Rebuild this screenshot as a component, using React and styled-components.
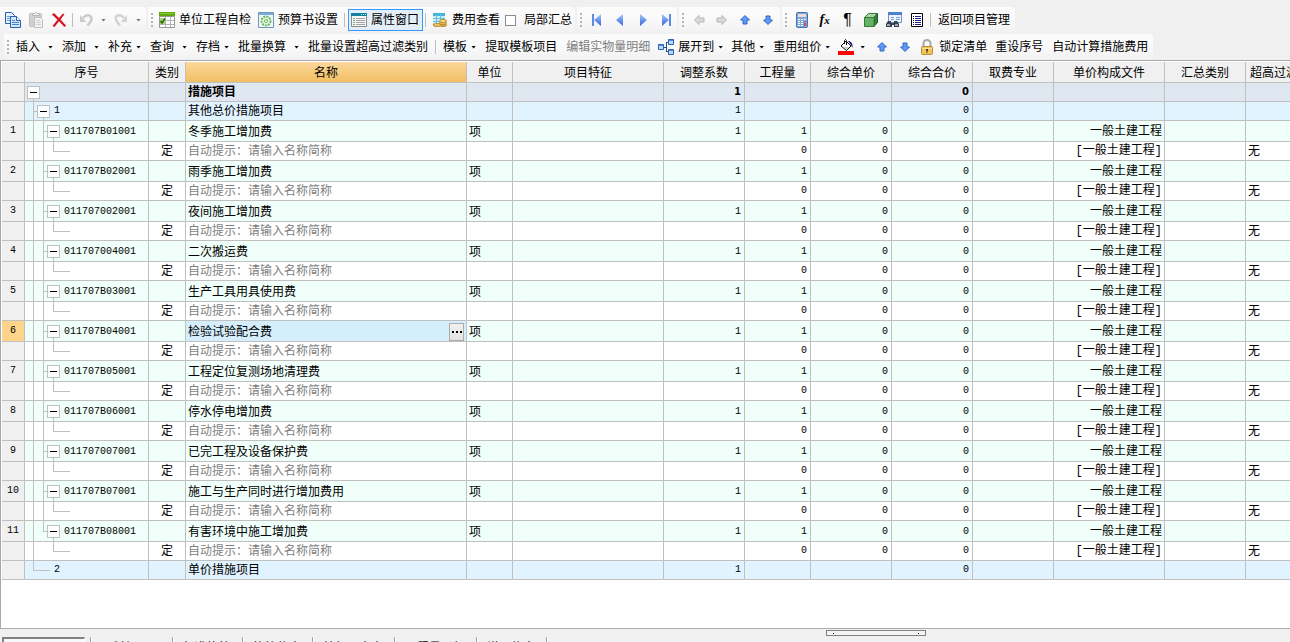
import { Fragment, useState } from "react";
import styled, { createGlobalStyle, css } from "styled-components";

const ITEMS = [
  { code: "011707B01001", name: "冬季施工增加费" },
  { code: "011707B02001", name: "雨季施工增加费" },
  { code: "011707002001", name: "夜间施工增加费" },
  { code: "011707004001", name: "二次搬运费" },
  { code: "011707B03001", name: "生产工具用具使用费" },
  { code: "011707B04001", name: "检验试验配合费" },
  { code: "011707B05001", name: "工程定位复测场地清理费" },
  { code: "011707B06001", name: "停水停电增加费" },
  { code: "011707007001", name: "已完工程及设备保护费" },
  { code: "011707B07001", name: "施工与生产同时进行增加费用" },
  { code: "011707B08001", name: "有害环境中施工增加费" },
];

const COLUMNS = [
  { title: "", width: 23 },
  { title: "序号", width: 124 },
  { title: "类别", width: 37 },
  { title: "名称", width: 281, active: true },
  { title: "单位", width: 46 },
  { title: "项目特征", width: 151 },
  { title: "调整系数", width: 81 },
  { title: "工程量", width: 66 },
  { title: "综合单价", width: 81 },
  { title: "综合合价", width: 81 },
  { title: "取费专业", width: 81 },
  { title: "单价构成文件", width: 111 },
  { title: "汇总类别", width: 81 },
  { title: "超高过滤类别", width: 81 },
];

const TABS = [
  "工料机显示",
  "标准换算",
  "换算信息",
  "特征及内容",
  "工程量明细",
  "说明信息",
];

function App() {
  const [selected, setSelected] = useState(5);

  return (
    <Page>
      <GlobalStyle />
      <Toolbars>
        <MainToolbar />
        <EditToolbar />
      </Toolbars>
      <GridPanel>
        <Grid>
          <colgroup>
            {COLUMNS.map((col, i) => (
              <Col key={i} $width={col.width} />
            ))}
          </colgroup>
          <thead>
            <tr>
              {COLUMNS.map((col, i) => (
                <HeadCell key={i} $active={col.active}>
                  {col.title}
                </HeadCell>
              ))}
            </tr>
          </thead>
          <tbody>
            <Row $kind="root">
              <RowHead />
              <Cell>
                <Tree>
                  <Node>
                    <Toggle aria-label="折叠" />
                  </Node>
                </Tree>
              </Cell>
              <Cell />
              <Cell>措施项目</Cell>
              <Cell />
              <Cell />
              <NumCell>1</NumCell>
              <NumCell />
              <NumCell />
              <NumCell>0</NumCell>
              <EmptyCells count={4} />
            </Row>
            <Row $kind="group">
              <RowHead />
              <Cell>
                <Tree>
                  <Guide $branch />
                  <Node>
                    <Toggle aria-label="折叠" />
                  </Node>
                  <Code>1</Code>
                </Tree>
              </Cell>
              <Cell />
              <Cell>其他总价措施项目</Cell>
              <Cell />
              <Cell />
              <NumCell>1</NumCell>
              <NumCell />
              <NumCell />
              <NumCell>0</NumCell>
              <EmptyCells count={4} />
            </Row>
            {ITEMS.map((item, i) => (
              <ItemRows
                key={item.code}
                item={item}
                index={i}
                last={i === ITEMS.length - 1}
                selected={i === selected}
                onSelect={() => setSelected(i)}
              />
            ))}
            <Row $kind="group">
              <RowHead />
              <Cell>
                <Tree>
                  <Elbow />
                  <Code>2</Code>
                </Tree>
              </Cell>
              <Cell />
              <Cell>单价措施项目</Cell>
              <Cell />
              <Cell />
              <NumCell>1</NumCell>
              <NumCell />
              <NumCell />
              <NumCell>0</NumCell>
              <EmptyCells count={4} />
            </Row>
          </tbody>
        </Grid>
      </GridPanel>
      <Splitter>
        <SplitHandle aria-label="展开面板">
          <i />
          <i />
        </SplitHandle>
      </Splitter>
      <TabStrip>
        <ActiveTab>查看单价构成</ActiveTab>
        {TABS.map((tab) => (
          <Tab key={tab}>{tab}</Tab>
        ))}
        <TabEnd />
      </TabStrip>
    </Page>
  );
}

function EmptyCells({ count }) {
  return Array.from({ length: count }, (_, i) => <Cell key={i} />);
}

function ItemRows({ item, index, last, selected, onSelect }) {
  return (
    <Fragment>
      <Row $kind="item" onClick={onSelect}>
        <RowHead $selected={selected}>{index + 1}</RowHead>
        <Cell>
          <Tree $tall>
            <Guide />
            <Guide $branch $end={last} />
            <Node>
              <Toggle aria-label="折叠" />
            </Node>
            <Code>{item.code}</Code>
          </Tree>
        </Cell>
        <Cell />
        <Cell $selected={selected}>
          {selected ? (
            <Editing>
              {item.name}
              <MoreButton aria-label="更多">
                <i />
                <i />
                <i />
              </MoreButton>
            </Editing>
          ) : (
            item.name
          )}
        </Cell>
        <Cell>项</Cell>
        <Cell />
        <NumCell>1</NumCell>
        <NumCell>1</NumCell>
        <NumCell>0</NumCell>
        <NumCell>0</NumCell>
        <Cell />
        <FileCell>一般土建工程</FileCell>
        <Cell />
        <Cell />
      </Row>
      <Row $kind="sub">
        <RowHead />
        <Cell>
          <Tree>
            <Guide />
            <Guide $blank={last} />
            <Elbow />
          </Tree>
        </Cell>
        <Cell $align="center">定</Cell>
        <Cell $muted>自动提示：请输入名称简称</Cell>
        <Cell />
        <Cell />
        <NumCell />
        <NumCell>0</NumCell>
        <NumCell>0</NumCell>
        <NumCell>0</NumCell>
        <Cell />
        <FileCell>[一般土建工程]</FileCell>
        <Cell />
        <Cell>无</Cell>
      </Row>
    </Fragment>
  );
}

function MainToolbar() {
  return (
    <Toolbar>
      <Segment $first>
        <IconButton aria-label="复制"><CopyIcon /></IconButton>
        <IconButton aria-label="粘贴"><PasteIcon /></IconButton>
        <IconButton aria-label="删除"><DeleteIcon /></IconButton>
        <Divider />
        <SplitIconButton aria-label="撤销"><UndoIcon /><Caret $muted /></SplitIconButton>
        <SplitIconButton aria-label="重做"><RedoIcon /><Caret $muted /></SplitIconButton>
      </Segment>
      <Segment>
        <Grip />
        <LabelButton><CheckTableIcon />单位工程自检</LabelButton>
        <LabelButton><SettingsIcon />预算书设置</LabelButton>
        <Divider />
        <PressedButton><WindowIcon />属性窗口</PressedButton>
        <Divider />
        <LabelButton><CoinsIcon />费用查看</LabelButton>
        <CheckLabel>
          <CheckBox type="checkbox" />
          局部汇总
        </CheckLabel>
      </Segment>
      <Segment>
        <Grip />
        <IconButton aria-label="第一条"><NavIcon bar="left" left /></IconButton>
        <IconButton aria-label="上一条"><NavIcon left /></IconButton>
        <IconButton aria-label="下一条"><NavIcon /></IconButton>
        <IconButton aria-label="最后一条"><NavIcon bar="right" /></IconButton>
      </Segment>
      <Segment $pad>
        <Grip />
        <IconButton aria-label="升级"><GrayArrowIcon left /></IconButton>
        <IconButton aria-label="降级"><GrayArrowIcon /></IconButton>
        <IconButton aria-label="上移"><BlueArrowIcon /></IconButton>
        <IconButton aria-label="下移"><BlueArrowIcon down /></IconButton>
      </Segment>
      <Segment>
        <Grip />
        <IconButton aria-label="计算器"><CalculatorIcon /></IconButton>
        <IconButton aria-label="函数"><FxMark><b>f</b>x</FxMark></IconButton>
        <IconButton aria-label="特殊符号"><Pilcrow>¶</Pilcrow></IconButton>
        <IconButton aria-label="图元"><CubeIcon /></IconButton>
        <IconButton aria-label="查找"><FindIcon /></IconButton>
        <IconButton aria-label="清单"><ListIcon /></IconButton>
        <Divider />
        <TextButton>返回项目管理</TextButton>
      </Segment>
    </Toolbar>
  );
}

function EditToolbar() {
  return (
    <Toolbar $indent>
      <Segment>
        <Grip />
        <TextButton $split>插入<Caret /></TextButton>
        <TextButton $split>添加<Caret /></TextButton>
        <TextButton>补充<Caret /></TextButton>
        <TextButton $split>查询<Caret /></TextButton>
        <TextButton>存档<Caret /></TextButton>
        <TextButton $split>批量换算<Caret /></TextButton>
        <TextButton>批量设置超高过滤类别</TextButton>
        <Divider />
        <TextButton>模板<Caret /></TextButton>
        <TextButton>提取模板项目</TextButton>
        <TextButton disabled>编辑实物量明细</TextButton>
        <LabelButton><ExpandIcon />展开到<Caret /></LabelButton>
        <TextButton>其他<Caret /></TextButton>
        <TextButton>重用组价<Caret /></TextButton>
        <SplitIconButton aria-label="填充颜色"><FillIcon /><Caret /></SplitIconButton>
        <IconButton aria-label="上移"><BlueArrowIcon /></IconButton>
        <IconButton aria-label="下移"><BlueArrowIcon down /></IconButton>
        <LabelButton><LockIcon />锁定清单</LabelButton>
        <TextButton>重设序号</TextButton>
        <TextButton>自动计算措施费用</TextButton>
      </Segment>
    </Toolbar>
  );
}

/* icons */

function CopyIcon() {
  return (
    <Icon viewBox="0 0 16 16">
      <path d="M.5.5h6l3 3v8h-9z" fill="#e8f3fd" stroke="#2460ae" />
      <path d="M2 4.5h4M2 6.5h4M2 8.5h4" stroke="#5c9ad8" />
      <path d="M5.5 4.5h6l4 4v7h-10z" fill="#d3e8fb" stroke="#2460ae" />
      <path d="M11.5 4.5v4h4" fill="#fff" stroke="#2460ae" />
      <path d="M7 8.5h3M7 10.5h7M7 12.5h7" stroke="#3f83cd" />
    </Icon>
  );
}

function PasteIcon() {
  return (
    <Icon viewBox="0 0 16 16">
      <rect x="1.5" y="1.5" width="12" height="13" rx="1" fill="#d0d0d0" stroke="#c0c0c0" />
      <path d="M4.5 3.5v-2h2l1-1h1l1 1h2v2z" fill="#ededed" stroke="#b8b8b8" />
      <path d="M6.5 5.5h6l2 2v8h-8z" fill="#f3f3f3" stroke="#c0c0c0" />
      <path d="M8 8.5h4M8 10.5h5M8 12.5h5" stroke="#d0d0d0" />
    </Icon>
  );
}

function DeleteIcon() {
  return (
    <Icon viewBox="0 0 16 16">
      <path d="M1 2.5 3 1l5 5 4-4.5 1.5.8-4 5.2 5.500 6-1.500 1.500L8 9.300 3.500 15 1.500 14l5-6.300z" fill="#d8101f" />
    </Icon>
  );
}

function UndoIcon() {
  return (
    <Icon viewBox="0 0 16 16">
      <path d="M4 6c4-4.5 9-3 8.500 1.500-.3 2.500-2.500 4-4 6" fill="none" stroke="#cbcbcb" strokeWidth="2.500" />
      <path d="M1 3v7h6z" fill="#cbcbcb" />
    </Icon>
  );
}

function RedoIcon() {
  return (
    <Icon viewBox="0 0 16 16">
      <path d="M10 6C6 1.500 1 3 2 7.500c.5 2.500 2.500 4 4 6" fill="none" stroke="#d2d2d2" strokeWidth="2.500" />
      <path d="M13 3v7H7z" fill="#d2d2d2" />
    </Icon>
  );
}

function CheckTableIcon() {
  return (
    <Icon viewBox="0 0 16 16">
      <path d="M.5 4.500h15v11H.5z" fill="#fff" stroke="#999" />
      <path d="M0 0h16v4H0z" fill="#5fa80c" />
      <path d="M1 1h14v1H1z" fill="#8dcc35" />
      <path d="M6.500 5v10M11.500 5v10M1 8.500h14M1 12.500h14" stroke="#b4b4b4" />
      <path d="M1 6h5v6H1z" fill="#a8d66e" />
      <path d="m1.500 9 1.500 2 3-4.500" fill="none" stroke="#26670b" strokeWidth="1.500" />
    </Icon>
  );
}

function SettingsIcon() {
  return (
    <Icon viewBox="0 0 16 16">
      <path d="M.5.5h15v15H.5z" fill="#eef7fc" stroke="#7198b9" />
      <path d="M1 1h14v2H1z" fill="#76add8" />
      <circle cx="8" cy="9" r="4.500" fill="#e3f5da" stroke="#6db85e" strokeWidth="2" strokeDasharray="2 1" />
      <circle cx="8" cy="9" r="1.500" fill="#fff" stroke="#6db85e" />
    </Icon>
  );
}

function WindowIcon() {
  return (
    <Icon viewBox="0 0 16 16">
      <path d="M.5 1.500h15v13H.5z" fill="#f6f6f6" stroke="#8b8b8b" />
      <path d="M0 1h16v3H0z" fill="#14809f" />
      <path d="M10 2h1v1h-1zM12 2h1v1h-1zM14 2h1v1h-1z" fill="#bcecf8" />
      <path d="M2 6.500h2M2 8.500h2M2 10.500h2M2 12.500h2" stroke="#6fae64" />
      <path d="M5 6.500h9M5 8.500h9M5 10.500h9M5 12.500h9" stroke="#a5a5a5" />
    </Icon>
  );
}

function CoinsIcon() {
  return (
    <Icon viewBox="0 0 16 16">
      <path d="M1 1h12v11H1z" fill="#c9eefa" />
      <path d="M1 1h12v3H1z" fill="#42b4dc" />
      <path d="M1 6.500h12M1 9.500h12M4.500 2v10M8.500 2v10" stroke="#67bfdc" />
      <ellipse cx="11" cy="13" rx="3.500" ry="1.500" fill="#e0a63f" stroke="#b98a3c" />
      <ellipse cx="11" cy="11" rx="3.500" ry="1.500" fill="#f2c356" stroke="#b98a3c" />
      <ellipse cx="11" cy="9" rx="3.500" ry="1.500" fill="#fbdc83" stroke="#b98a3c" />
      <ellipse cx="5" cy="13" rx="4" ry="1.500" fill="#f4c75e" stroke="#b98a3c" />
    </Icon>
  );
}

function NavIcon({ bar, left }) {
  return (
    <Icon viewBox="0 0 16 16">
      <defs>
        <linearGradient id="nav" x1="0" y1="0" x2="0" y2="1">
          <stop offset="0" stopColor="#a9c6fb" />
          <stop offset="1" stopColor="#3468d8" />
        </linearGradient>
      </defs>
      {bar === "left" && <path d="M3 2h2v12H3z" fill="#5b8be6" />}
      {bar === "right" && <path d="M11 2h2v12h-2z" fill="#5b8be6" />}
      {left ? (
        <path d={bar ? "M12 2v12L5 8z" : "M11 2v12L4 8z"} fill="url(#nav)" />
      ) : (
        <path d={bar ? "M4 2v12l7-6z" : "M5 2v12l7-6z"} fill="url(#nav)" />
      )}
    </Icon>
  );
}

function GrayArrowIcon({ left }) {
  return (
    <Icon viewBox="0 0 16 16">
      <path
        d={left ? "M3.500 8 8 3.500V6h5v4H8v2.500z" : "M12.500 8 8 3.500V6H3v4h5v2.500z"}
        fill="#d9d9d9"
        stroke="#b7b7b7"
      />
    </Icon>
  );
}

function BlueArrowIcon({ down }) {
  return (
    <Icon viewBox="0 0 16 16">
      <path
        d={down ? "M8 12.500 3.500 8H6V4h4v4h2.500z" : "M8 3.500 12.500 8H10v4H6V8H3.500z"}
        fill="#5e9bf5"
        stroke="#2f66cf"
      />
    </Icon>
  );
}

function CalculatorIcon() {
  return (
    <Icon viewBox="0 0 16 16">
      <rect x="2.500" y=".5" width="11" height="15" rx="1" fill="#7aa6dd" stroke="#4674b4" />
      <path d="M4 2h8v3H4z" fill="#f3d9cf" />
      <path d="M4 7h2v1H4zM7 7h2v1H7zM10 7h2v1h-2zM4 9h2v1H4zM7 9h2v1H7zM4 11h2v1H4zM7 11h2v1H7zM4 13h2v1H4zM7 13h2v1H7z" fill="#fff" />
      <path d="M10 9h2v1h-2zM10 11h2v3h-2z" fill="#d8475b" />
    </Icon>
  );
}

function CubeIcon() {
  return (
    <Icon viewBox="0 0 16 16">
      <path d="m1.500 5.500 4-4h9l-3.500 4z" fill="#a3d7a1" stroke="#347b38" />
      <path d="M11 5.500 14.500 1.500v9l-3.500 4z" fill="#347f3a" stroke="#245f2b" />
      <path d="M1.500 5.500H11v9H1.500z" fill="#66b268" stroke="#347b38" />
    </Icon>
  );
}

function FindIcon() {
  return (
    <Icon viewBox="0 0 16 16">
      <path d="M2.500.5h13v10h-13z" fill="#eaf3ff" stroke="#6d93cf" />
      <path d="M2 0h14v3H2z" fill="#4d81cf" />
      <path d="M5 5.500h3M10 5.500h4M5 7.500h3M10 7.500h4" stroke="#7d9ed0" />
      <path d="M2 9h3v2h3V9h3l2 3v3H8v-2H6v2H0v-3z" fill="#38404c" />
      <path d="M1 12h3v2H1zM9 12h3v2H9z" fill="#99aabd" />
    </Icon>
  );
}

function ListIcon() {
  return (
    <Icon viewBox="0 0 16 16">
      <path d="M2.500 1.500h11v13h-11z" fill="#fff" stroke="#000" />
      <path d="M4 4.500h1M4 6.500h1M4 8.500h1M4 10.500h1M4 12.500h1" stroke="#000" />
      <path d="M6 4.500h6M6 6.500h6M6 8.500h6M6 10.500h6M6 12.500h6" stroke="#22228c" />
    </Icon>
  );
}

function ExpandIcon() {
  return (
    <Icon viewBox="0 0 16 16">
      <path d="M5 8.500h3.500M8.500 3v10M8.500 3.500h2M8.500 12.500h2" fill="none" stroke="#274e92" />
      <path d="M.5 5.500h5v5h-5zM10.500.5h5v5h-5zM10.500 10.500h5v5h-5z" fill="#b9d5fb" stroke="#2e62b4" />
      <path d="M1 6h4v1H1zM11 1h4v1h-4zM11 11h4v1h-4z" fill="#568ade" />
    </Icon>
  );
}

function FillIcon() {
  return (
    <Icon viewBox="0 0 16 16">
      <path d="m3 7 5-5 5 5-4.500 4.500z" fill="#fff" stroke="#111" />
      <path d="M5 8h6l-2.500 2.500z" fill="#c4c4c4" />
      <path d="M6.500 5V1.500l1-1 1 1V6" fill="none" stroke="#111" />
      <path d="M10 2c3 0 5 2 4.500 7L13 6z" fill="#16167b" />
      <path d="M0 12h16v4H0z" fill="#f00" />
    </Icon>
  );
}

function LockIcon() {
  return (
    <Icon viewBox="0 0 16 16">
      <path d="M4.500 8V4.500a3.500 3.500 0 0 1 7 0V8" fill="none" stroke="#a8a8a8" strokeWidth="2" />
      <rect x="2.500" y="7.500" width="11" height="8" rx="1" fill="#f1c35b" stroke="#b98b38" />
      <path d="M3 9h10v1H3z" fill="#fbe09a" />
      <path d="M7 10h2v1.500l-.5.5v2h-1v-2L7 11.500z" fill="#573c10" />
    </Icon>
  );
}

/* styles */

const GlobalStyle = createGlobalStyle`
  body {
    margin: 0;
    overflow: hidden;
    background: #f0f0f0;
  }

  * {
    box-sizing: border-box;
  }

  button,
  label,
  table {
    font-family: "Liberation Sans", "Noto Sans CJK SC", sans-serif;
    font-size: 12px;
    line-height: 18px;
    color: #000;
  }
`;

const Page = styled.div`
  height: 100vh;
  display: flex;
  flex-direction: column;
`;

const Toolbars = styled.header`
  display: flex;
  flex-direction: column;
  gap: 1px;
  padding-top: 7px;
`;

const Toolbar = styled.div`
  display: flex;
  gap: 2px;
  padding-left: ${({ $indent }) => ($indent ? "4px" : "0")};
`;

const Segment = styled.div`
  display: flex;
  align-items: center;
  height: 26px;
  padding-left: ${({ $first }) => ($first ? "1px" : "0")};
  padding-right: ${({ $pad }) => ($pad ? "1px" : "0")};
  border-radius: 0 3px 3px 0;
  background: linear-gradient(#fcfcfc, #f9f9f9 50%, #f1f1f1);
`;

const Grip = styled.span`
  width: 2px;
  height: 14px;
  margin: 0 3px;
  background: repeating-linear-gradient(#b4b4b4 0 2px, transparent 2px 4px);
`;

const Divider = styled.span`
  width: 1px;
  height: 14px;
  margin: 0 3px 0 2px;
  background: #bdbdbd;
`;

const Icon = styled.svg`
  width: 16px;
  height: 16px;
  flex: none;
`;

const Caret = styled.span`
  width: 5px;
  height: 3px;
  background: ${({ $muted }) => ($muted ? "#777" : "#000")};
  clip-path: polygon(0 0, 100% 0, 50% 100%);
`;

const BaseButton = styled.button`
  display: flex;
  align-items: center;
  flex: none;
  height: 22px;
  border: 0;
  padding: 0;
  background: none;
  white-space: nowrap;
`;

const IconButton = styled(BaseButton)`
  justify-content: center;
  width: 23px;
`;

const SplitIconButton = styled(BaseButton)`
  gap: 6px;
  padding: 0 5px 0 3px;
`;

const TextButton = styled(BaseButton)`
  gap: ${({ $split }) => ($split ? "8px" : "4px")};
  padding: 0 5px 0 4px;

  &:disabled {
    color: #808080;
  }
`;

const LabelButton = styled(BaseButton)`
  gap: 4px;
  padding: 0 4px 0 3px;
`;

const PressedButton = styled(BaseButton)`
  gap: 4px;
  padding: 0 3px 0 2px;
  border: 1px solid #3399ff;
  background: #e3eef9;
`;

const CheckLabel = styled.label`
  display: flex;
  align-items: center;
  gap: 8px;
  padding: 0 3px 0 1px;
  white-space: nowrap;
`;

const CheckBox = styled.input`
  appearance: none;
  width: 11px;
  height: 11px;
  margin: 0;
  border: 1px solid #8c8c8c;
  background: #fff;

  &:checked {
    background: #3399ff;
  }
`;

const FxMark = styled.span`
  font-family: "Liberation Serif", serif;
  font-size: 11px;
  font-style: italic;
  font-weight: bold;

  b {
    font-size: 14px;
  }
`;

const Pilcrow = styled.span`
  font-family: "Liberation Sans", sans-serif;
  font-size: 16px;
`;

const GridPanel = styled.main`
  flex: 1;
  min-height: 0;
  overflow: hidden;
  padding: 1px 0 0 1px;
  border: solid #a9a9ad;
  border-width: 1px 0 1px 1px;
  background: #fff;
`;

const Grid = styled.table`
  width: 1325px;
  table-layout: fixed;
  border-collapse: separate;
  border-spacing: 0;
`;

const Col = styled.col`
  width: ${({ $width }) => $width}px;
`;

const cellBorder = css`
  border: solid #c0c0c0;
  border-width: 0 1px 1px 0;
`;

const HeadCell = styled.th`
  ${cellBorder}
  height: 21px;
  padding: 1px 0 0;
  font-weight: normal;
  white-space: nowrap;
  background: ${({ $active }) =>
    $active ? "linear-gradient(#fad79b, #f2c063)" : "#f0f0f0"};
`;

const RowHead = styled.th`
  ${cellBorder}
  padding: 0;
  font-family: "Liberation Mono", monospace;
  font-size: 10px;
  font-weight: normal;
  background: ${({ $selected }) => ($selected ? "#fcd58a" : "#f0f0f0")};
`;

const Cell = styled.td`
  ${cellBorder}
  padding: 0 2px;
  overflow: hidden;
  vertical-align: bottom;
  white-space: nowrap;
  text-align: ${({ $align }) => $align || "left"};
  color: ${({ $muted }) => ($muted ? "#808080" : "#000")};
  background: ${({ $selected }) => ($selected ? "#d5eefb" : "transparent")};
`;

const FileCell = styled(Cell)`
  font-family: "Liberation Mono", "Noto Sans CJK SC", monospace;
  text-align: right;
`;

const NumCell = styled.td`
  ${cellBorder}
  padding: 0 3px;
  vertical-align: bottom;
  font-family: "Liberation Mono", monospace;
  font-size: 10px;
  text-align: right;
`;

const rowColors = {
  root: "#dfe7f1",
  group: "#e1f3ff",
  item: "#f0fffa",
  sub: "#fff",
};

const Row = styled.tr`
  height: ${({ $kind }) => ($kind === "item" ? "21px" : "19px")};
  background: ${({ $kind }) => rowColors[$kind]};

  ${({ $kind }) =>
    $kind === "root" &&
    css`
      ${Cell} {
        font-weight: bold;
      }

      ${NumCell} {
        font-family: "DejaVu Sans", sans-serif;
        font-weight: bold;
      }
    `}
`;

const Tree = styled.div`
  display: flex;
  height: ${({ $tall }) => ($tall ? "20px" : "18px")};
`;

const line = "linear-gradient(#c0c0c0, #c0c0c0)";

const Guide = styled.span`
  width: 10px;
  background-image: ${({ $blank }) => ($blank ? "none" : `${line}, ${line}`)};
  background-repeat: no-repeat;
  background-position: 6px 0, 6px 50%;
  background-size:
    1px ${({ $end }) => ($end ? "50%" : "100%")},
    ${({ $branch }) => ($branch ? "4px" : "1px")} 1px;
`;

const Elbow = styled.span`
  width: 23px;
  background-image: ${line}, ${line};
  background-repeat: no-repeat;
  background-position: 6px 0, 6px 50%;
  background-size: 1px 50%, 17px 1px;
`;

const Node = styled.span`
  display: flex;
  align-items: center;
  width: 13px;
  background: ${line} 6px 100% / 1px 50% no-repeat;
`;

const Toggle = styled.button`
  width: 13px;
  height: 13px;
  padding: 0;
  border: 1px solid #c0c0c0;
  background: linear-gradient(#000, #000) center / 7px 1px no-repeat #fff;
`;

const Code = styled.span`
  align-self: flex-end;
  padding-left: 4px;
  font-family: "Liberation Mono", monospace;
  font-size: 10px;
`;

const Editing = styled.div`
  display: flex;
  align-items: flex-end;
  justify-content: space-between;
`;

const MoreButton = styled.button`
  display: flex;
  align-items: center;
  justify-content: center;
  gap: 2px;
  width: 15px;
  height: 18px;
  padding: 0;
  border: 1px solid #acacac;
  background: linear-gradient(#f0f0f0, #e3e3e3);

  i {
    width: 2px;
    height: 2px;
    background: #000;
  }
`;

const Splitter = styled.div`
  flex: none;
  height: 8px;
  padding-top: 1px;
`;

const SplitHandle = styled.button`
  display: flex;
  align-items: center;
  justify-content: space-between;
  width: 100px;
  height: 6px;
  margin-left: 64%;
  padding: 0 6px;
  border: 1px solid #808080;
  background: #f4f4f4;

  i {
    width: 1px;
    height: 1px;
    background: #000;
  }
`;

const TabStrip = styled.nav`
  display: flex;
  flex: none;
  height: 5px;
  padding-left: 2px;
  overflow: hidden;
`;

const Tab = styled.button`
  flex: none;
  height: 22px;
  padding: 2px 11px 2px 10px;
  border: 0;
  border-left: 1px solid #a0a0a0;
  background: #f0f0f0;
  box-shadow: inset 1px 0 #fff;
`;

const ActiveTab = styled(Tab)`
  width: 83px;
  margin-right: 5px;
  padding: 4px 4px 0;
  border: 2px solid #808080;
  border-right: 1px solid #fff;
  background: #f8f8f8;
  box-shadow: none;
`;

const TabEnd = styled.span`
  width: 2px;
  border-left: 1px solid #a0a0a0;
  background: #fff;
`;

export default App;
